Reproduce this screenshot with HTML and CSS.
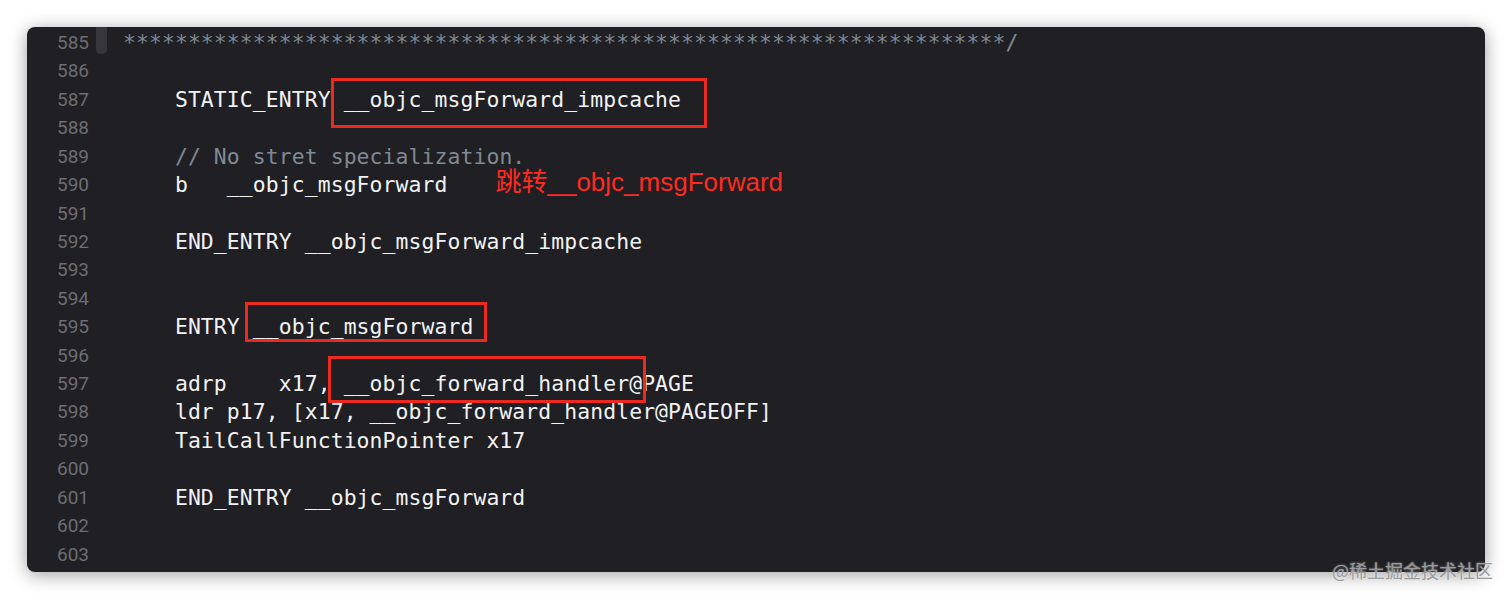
FILE: index.html
```html
<!DOCTYPE html>
<html lang="zh">
<head>
<meta charset="utf-8">
<title>objc_msgForward</title>
<link rel="stylesheet" href="styles.css">
</head>
<body>
<div class="page">
  <div class="editor">
    <div class="gutter">
      <div class="ln">585</div><div class="ln">586</div><div class="ln">587</div><div class="ln">588</div>
      <div class="ln">589</div><div class="ln">590</div><div class="ln">591</div><div class="ln">592</div>
      <div class="ln">593</div><div class="ln">594</div><div class="ln">595</div><div class="ln">596</div>
      <div class="ln">597</div><div class="ln">598</div><div class="ln">599</div><div class="ln">600</div>
      <div class="ln">601</div><div class="ln">602</div><div class="ln">603</div>
    </div>
    <div class="ribbon"><div class="marker"></div></div>
    <div class="code">
      <div class="line comment">********************************************************************/</div>
      <div class="line"> </div>
      <div class="line">    STATIC_ENTRY __objc_msgForward_impcache</div>
      <div class="line"> </div>
      <div class="line">    <span class="comment">// No stret specialization.</span></div>
      <div class="line">    b   __objc_msgForward<span class="note">跳转__objc_msgForward</span></div>
      <div class="line"> </div>
      <div class="line">    END_ENTRY __objc_msgForward_impcache</div>
      <div class="line"> </div>
      <div class="line"> </div>
      <div class="line">    ENTRY __objc_msgForward</div>
      <div class="line"> </div>
      <div class="line">    adrp    x17, __objc_forward_handler@PAGE</div>
      <div class="line">    ldr p17, [x17, __objc_forward_handler@PAGEOFF]</div>
      <div class="line">    TailCallFunctionPointer x17</div>
      <div class="line"> </div>
      <div class="line">    END_ENTRY __objc_msgForward</div>
      <div class="line"> </div>
      <div class="line"> </div>
    </div>
    <div class="box box-1"></div>
    <div class="box box-2"></div>
    <div class="box box-3"></div>
  </div>
  <div class="watermark">@稀土掘金技术社区</div>
</div>
</body>
</html>
```
FILE: styles.css
```css
html, body {
  margin: 0;
  padding: 0;
  background: #ffffff;
}

.page {
  position: relative;
  width: 1512px;
  height: 600px;
  padding: 27px 0 0 27px;
  box-sizing: border-box;
}

.editor {
  position: relative;
  display: flex;
  width: 1458px;
  height: 545px;
  background: #1f1f24;
  border-radius: 8px;
  box-shadow: 0 3px 18px rgba(0, 0, 0, 0.38);
  overflow: hidden;
  padding-top: 2px;
  box-sizing: border-box;
}

.gutter {
  width: 62px;
  flex: none;
  text-align: right;
  font-family: Roboto, "Liberation Sans", sans-serif;
  font-size: 19px;
  color: #6d6d72;
}

.ln {
  height: 28.43px;
  line-height: 28.43px;
}

.ribbon {
  flex: none;
  width: 11px;
  margin-left: 7px;
  margin-top: -2px;
}

.marker {
  height: 27px;
  background: #36363b;
  border-radius: 0 0 5px 5px;
}

.code {
  flex: 1;
  margin-left: 16px;
  font-family: "DejaVu Sans Mono", "Liberation Mono", monospace;
  font-size: 21.4px;
  letter-spacing: 0.1px;
  color: #f2f2f2;
}

.line {
  height: 28.43px;
  line-height: 28.43px;
  white-space: pre;
}

.comment {
  color: #7f8a95;
}

.note {
  display: inline-block;
  margin-left: 48px;
  font-family: "Liberation Sans", "Noto Sans CJK SC", sans-serif;
  font-size: 26px;
  letter-spacing: 0;
  line-height: 22px;
  color: #ff2b20;
  vertical-align: top;
}

.box {
  position: absolute;
  border: 3px solid #ec2a20;
  box-sizing: border-box;
}

.box-1 {
  left: 304px;
  top: 51px;
  width: 376px;
  height: 50px;
}

.box-2 {
  left: 218px;
  top: 275px;
  width: 242px;
  height: 40px;
}

.box-3 {
  left: 301px;
  top: 329px;
  width: 318px;
  height: 47px;
}

.watermark {
  position: absolute;
  left: 1332px;
  top: 558px;
  font-family: "Noto Sans CJK SC", sans-serif;
  font-size: 18px;
  line-height: 24px;
  color: #9a9a9a;
  text-shadow: 0 0 2px rgba(255, 255, 255, 0.6);
}
```
